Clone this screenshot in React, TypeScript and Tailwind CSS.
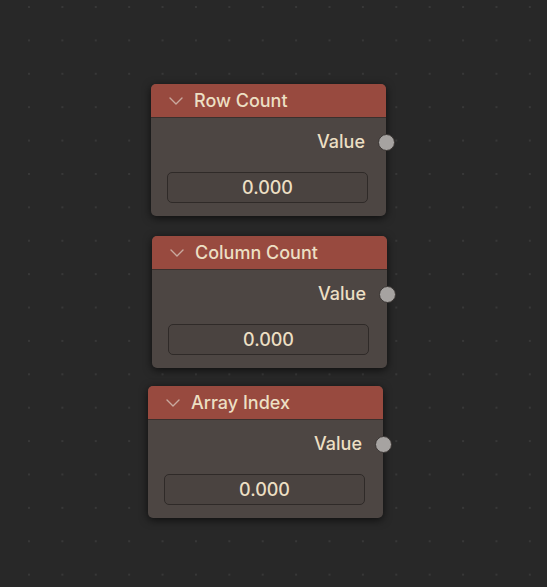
import React from "react";

type NodeProps = { title: string; left: number; top: number };

function Chevron() {
  return (
    <svg width="14" height="8" viewBox="0 0 14 8" className="shrink-0">
      <path d="M1 1 L7 7 L13 1" fill="none" stroke="#c9a99f" strokeWidth="1.4" strokeLinecap="round" strokeLinejoin="round" />
    </svg>
  );
}

function Node({ title, left, top }: NodeProps) {
  return (
    <div
      className="absolute w-[235px] rounded-[5px] bg-[#4d4643] shadow-[0_2px_8px_rgba(0,0,0,0.65)]"
      style={{ left, top }}
    >
      <div className="flex h-[33px] items-center rounded-t-[5px] bg-[#984a3f] pl-[18px] border-b border-[#3b302d] box-content">
        <Chevron />
        <span className="ml-[11px] text-[18px] font-medium leading-none text-[#ecdfc3]">{title}</span>
      </div>
      <div className="flex flex-col pt-[12px] pb-[13px]">
        <div className="relative flex h-[24px] items-center justify-end pr-[21px]">
          <span className="text-[18px] font-medium leading-none text-[#ecdfc3]">Value</span>
          <div className="absolute right-[-8.5px] top-[3.5px] h-[17px] w-[17px] rounded-full border border-[#3a3533] bg-[#a6a3a1]" />
        </div>
        <div className="mt-[18px] ml-[16px] mr-[18px] flex h-[31px] items-center justify-center rounded-[5px] border border-[#2f2a28] bg-[#4a4340]">
          <span className="text-[18px] font-medium leading-none text-[#ecdfc3]">0.000</span>
        </div>
      </div>
    </div>
  );
}

export default function App() {
  return (
    <div
      className="relative h-[587px] w-[547px] overflow-hidden bg-[#282828] bg-[radial-gradient(circle,#383838_1px,transparent_1.5px)] bg-[length:33.4px_33.4px] bg-[position:12.3px_-9.7px]"
      style={{ fontFamily: "Inter, 'DejaVu Sans', sans-serif" }}
    >
      <Node title="Row Count" left={151} top={84} />
      <Node title="Column Count" left={152} top={236} />
      <Node title="Array Index" left={148} top={386} />
    </div>
  );
}
